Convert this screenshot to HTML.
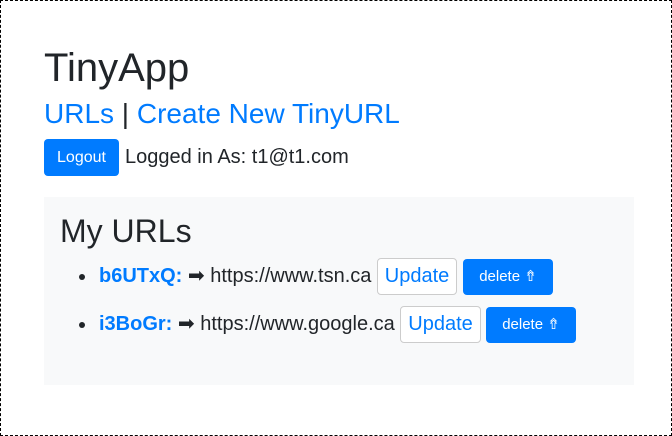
<!DOCTYPE html>
<html><head><style>
html,body{margin:0;padding:0;}
body{width:672px;height:436px;box-sizing:border-box;border:1px dashed #000;font-family:"Liberation Sans",sans-serif;color:#212529;position:relative;overflow:hidden;background:#fff;}
.a{position:absolute;white-space:nowrap;}
h1{position:absolute;left:43px;top:43px;margin:0;font-size:40px;font-weight:400;line-height:48px;}
.nav{left:43px;top:95px;font-size:28px;line-height:36px;}
.nav a{color:#007bff;text-decoration:none;}
.btnp{position:absolute;background:#007bff;color:#fff;border-radius:4px;text-align:center;}
.panel{position:absolute;left:43px;top:196px;width:590px;height:188px;background:#f8f9fa;}
.upd{position:absolute;border:1px solid #ccc;border-radius:4px;color:#007bff;background:#fff;font-size:20px;text-align:center;box-sizing:border-box;}
.li{font-size:20px;line-height:24px;}
.li b{color:#007bff;}
.dot{position:absolute;width:6px;height:6px;border-radius:50%;background:#212529;}
</style></head><body>
<h1>TinyApp</h1>
<div class="a nav"><a>URLs</a> | <a>Create New TinyURL</a></div>
<div class="btnp" style="left:43px;top:138px;width:75px;height:37px;line-height:37px;font-size:16px;">Logout</div>
<div class="a" style="left:124px;top:144px;font-size:20px;line-height:24px;">Logged in As: t1@t1.com</div>
<div class="panel"></div>
<div class="a" style="left:59px;top:210px;font-size:32px;line-height:40px;">My URLs</div>
<div class="dot" style="left:78px;top:273px;"></div>
<div class="a li" style="left:98px;top:263px;"><b>b6UTxQ:</b> ➡ https://www.tsn.ca</div>
<div class="upd" style="left:376px;top:257px;width:80px;height:37px;line-height:35px;">Update</div>
<div class="btnp" style="left:462px;top:258px;width:90px;height:36px;line-height:36px;font-size:15px;">delete ⇮</div>
<div class="dot" style="left:78px;top:321px;"></div>
<div class="a li" style="left:98px;top:311px;"><b>i3BoGr:</b> ➡ https://www.google.ca</div>
<div class="upd" style="left:399px;top:305px;width:81px;height:37px;line-height:35px;">Update</div>
<div class="btnp" style="left:485px;top:306px;width:90px;height:36px;line-height:36px;font-size:15px;">delete ⇮</div>
</body></html>
